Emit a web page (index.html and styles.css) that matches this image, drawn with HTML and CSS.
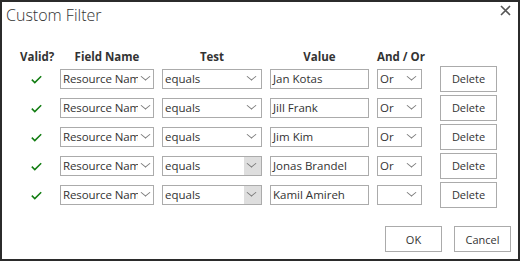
FILE: index.html
```html
<!DOCTYPE html>
<html lang="en">

<head>
    <meta charset="UTF-8">
    <title>Custom Filter</title>
    <link rel="stylesheet" href="styles.css">
</head>

<body>
    <!-- Dialog -->
    <div class="dialog">
        <div class="title-bar">
            <h1>Custom Filter</h1>
            <svg class="close" width="11" height="11" viewBox="0 0 11 11">
                <path d="M1 1 L10 10 M10 1 L1 10" stroke="#555" stroke-width="1.6" fill="none"/>
            </svg>
        </div>

        <div class="filter-grid">
            <div class="head">Valid?</div>
            <div class="head">Field Name</div>
            <div class="head">Test</div>
            <div class="head">Value</div>
            <div class="head">And / Or</div>
            <div class="head"></div>

            <!-- row 1 -->
            <div class="check"><svg width="11" height="9" viewBox="0 0 11 9"><path d="M0.8 4.6 L3.8 7.6 L10.2 1.2" stroke="#107c10" stroke-width="1.5" fill="none"/></svg></div>
            <div class="select field"><span class="txt">Resource Name</span><span class="arrow"></span></div>
            <div class="select"><span class="txt">equals</span><span class="arrow"></span></div>
            <div class="input">Jan Kotas</div>
            <div class="select small"><span class="txt">Or</span><span class="arrow"></span></div>
            <button class="btn">Delete</button>

            <!-- row 2 -->
            <div class="check"><svg width="11" height="9" viewBox="0 0 11 9"><path d="M0.8 4.6 L3.8 7.6 L10.2 1.2" stroke="#107c10" stroke-width="1.5" fill="none"/></svg></div>
            <div class="select field"><span class="txt">Resource Name</span><span class="arrow"></span></div>
            <div class="select"><span class="txt">equals</span><span class="arrow"></span></div>
            <div class="input">Jill Frank</div>
            <div class="select small"><span class="txt">Or</span><span class="arrow"></span></div>
            <button class="btn">Delete</button>

            <!-- row 3 -->
            <div class="check"><svg width="11" height="9" viewBox="0 0 11 9"><path d="M0.8 4.6 L3.8 7.6 L10.2 1.2" stroke="#107c10" stroke-width="1.5" fill="none"/></svg></div>
            <div class="select field"><span class="txt">Resource Name</span><span class="arrow"></span></div>
            <div class="select"><span class="txt">equals</span><span class="arrow"></span></div>
            <div class="input">Jim Kim</div>
            <div class="select small"><span class="txt">Or</span><span class="arrow"></span></div>
            <button class="btn">Delete</button>

            <!-- row 4 -->
            <div class="check"><svg width="11" height="9" viewBox="0 0 11 9"><path d="M0.8 4.6 L3.8 7.6 L10.2 1.2" stroke="#107c10" stroke-width="1.5" fill="none"/></svg></div>
            <div class="select field"><span class="txt">Resource Name</span><span class="arrow"></span></div>
            <div class="select shaded"><span class="txt">equals</span><span class="arrow"></span></div>
            <div class="input">Jonas Brandel</div>
            <div class="select small"><span class="txt">Or</span><span class="arrow"></span></div>
            <button class="btn">Delete</button>

            <!-- row 5 -->
            <div class="check"><svg width="11" height="9" viewBox="0 0 11 9"><path d="M0.8 4.6 L3.8 7.6 L10.2 1.2" stroke="#107c10" stroke-width="1.5" fill="none"/></svg></div>
            <div class="select field"><span class="txt">Resource Name</span><span class="arrow"></span></div>
            <div class="select shaded"><span class="txt">equals</span><span class="arrow"></span></div>
            <div class="input">Kamil Amireh</div>
            <div class="select small"><span class="txt"></span><span class="arrow"></span></div>
            <button class="btn">Delete</button>
        </div>

        <div class="footer">
            <button class="btn">OK</button>
            <button class="btn">Cancel</button>
        </div>
    </div>
</body>

</html>
```

FILE: styles.css
```css
/* Base */
body {
    margin: 0;
    font-family: 'Open Sans', 'Liberation Sans', sans-serif;
    color: #333;
    background: #fff;
}

/* Dialog frame */
.dialog {
    width: 520px;
    height: 261px;
    box-sizing: border-box;
    border: 2px solid #2b2b2b;
    background: #fff;
}

.title-bar {
    display: flex;
    justify-content: space-between;
    align-items: flex-start;
    height: 46px;
}

h1 {
    margin: 0;
    padding: 1px 0 0 4px;
    font-size: 16px;
    font-weight: 300;
    line-height: 24px;
    color: #333;
}

.close {
    margin: 3px 7px 0 0;
}

/* Filter table */
.filter-grid {
    display: grid;
    grid-template-columns: 32px 94px 100px 99px 45px 67px;
    grid-template-rows: 16px repeat(5, 29px);
    column-gap: 8px;
    align-items: center;
    padding-left: 18px;
}

.head {
    font-size: 11.5px;
    font-weight: 700;
    text-align: center;
    white-space: nowrap;
    color: #333;
}

.check {
    display: flex;
    justify-content: center;
    padding-top: 1px;
}

/* Fake select / input boxes */
.select,
.input {
    height: 20px;
    box-sizing: border-box;
    border: 1px solid #ababab;
    background: #fff;
    font-size: 11.5px;
    line-height: 18px;
    color: #333;
}

.input {
    padding-left: 2px;
    white-space: nowrap;
    overflow: hidden;
}

.select {
    display: flex;
}

.select .txt {
    flex: 1;
    padding-left: 2px;
    overflow: hidden;
    white-space: nowrap;
}

.select .arrow {
    width: 17px;
    position: relative;
}

.select .arrow:after {
    content: '';
    position: absolute;
    left: 4px;
    top: 3px;
    width: 6px;
    height: 6px;
    border-right: 1px solid #777;
    border-bottom: 1px solid #777;
    transform: scaleY(0.8) rotate(45deg);
}

.select.field .txt {
    flex: none;
    width: 75px;
    letter-spacing: -0.1px;
}

.select.field .arrow {
    margin-left: auto;
}

.select.shaded .arrow {
    background: #dedede;
}

/* Buttons */
.btn {
    width: 57px;
    height: 26px;
    box-sizing: border-box;
    border: 1px solid #ababab;
    background: #fff;
    font-family: 'Open Sans', 'Liberation Sans', sans-serif;
    font-size: 11px;
    color: #333;
    padding: 0;
}

.filter-grid .btn {
    justify-self: end;
}

.footer {
    display: flex;
    justify-content: flex-end;
    gap: 12px;
    margin-top: 17px;
    padding-right: 7px;
}
```
